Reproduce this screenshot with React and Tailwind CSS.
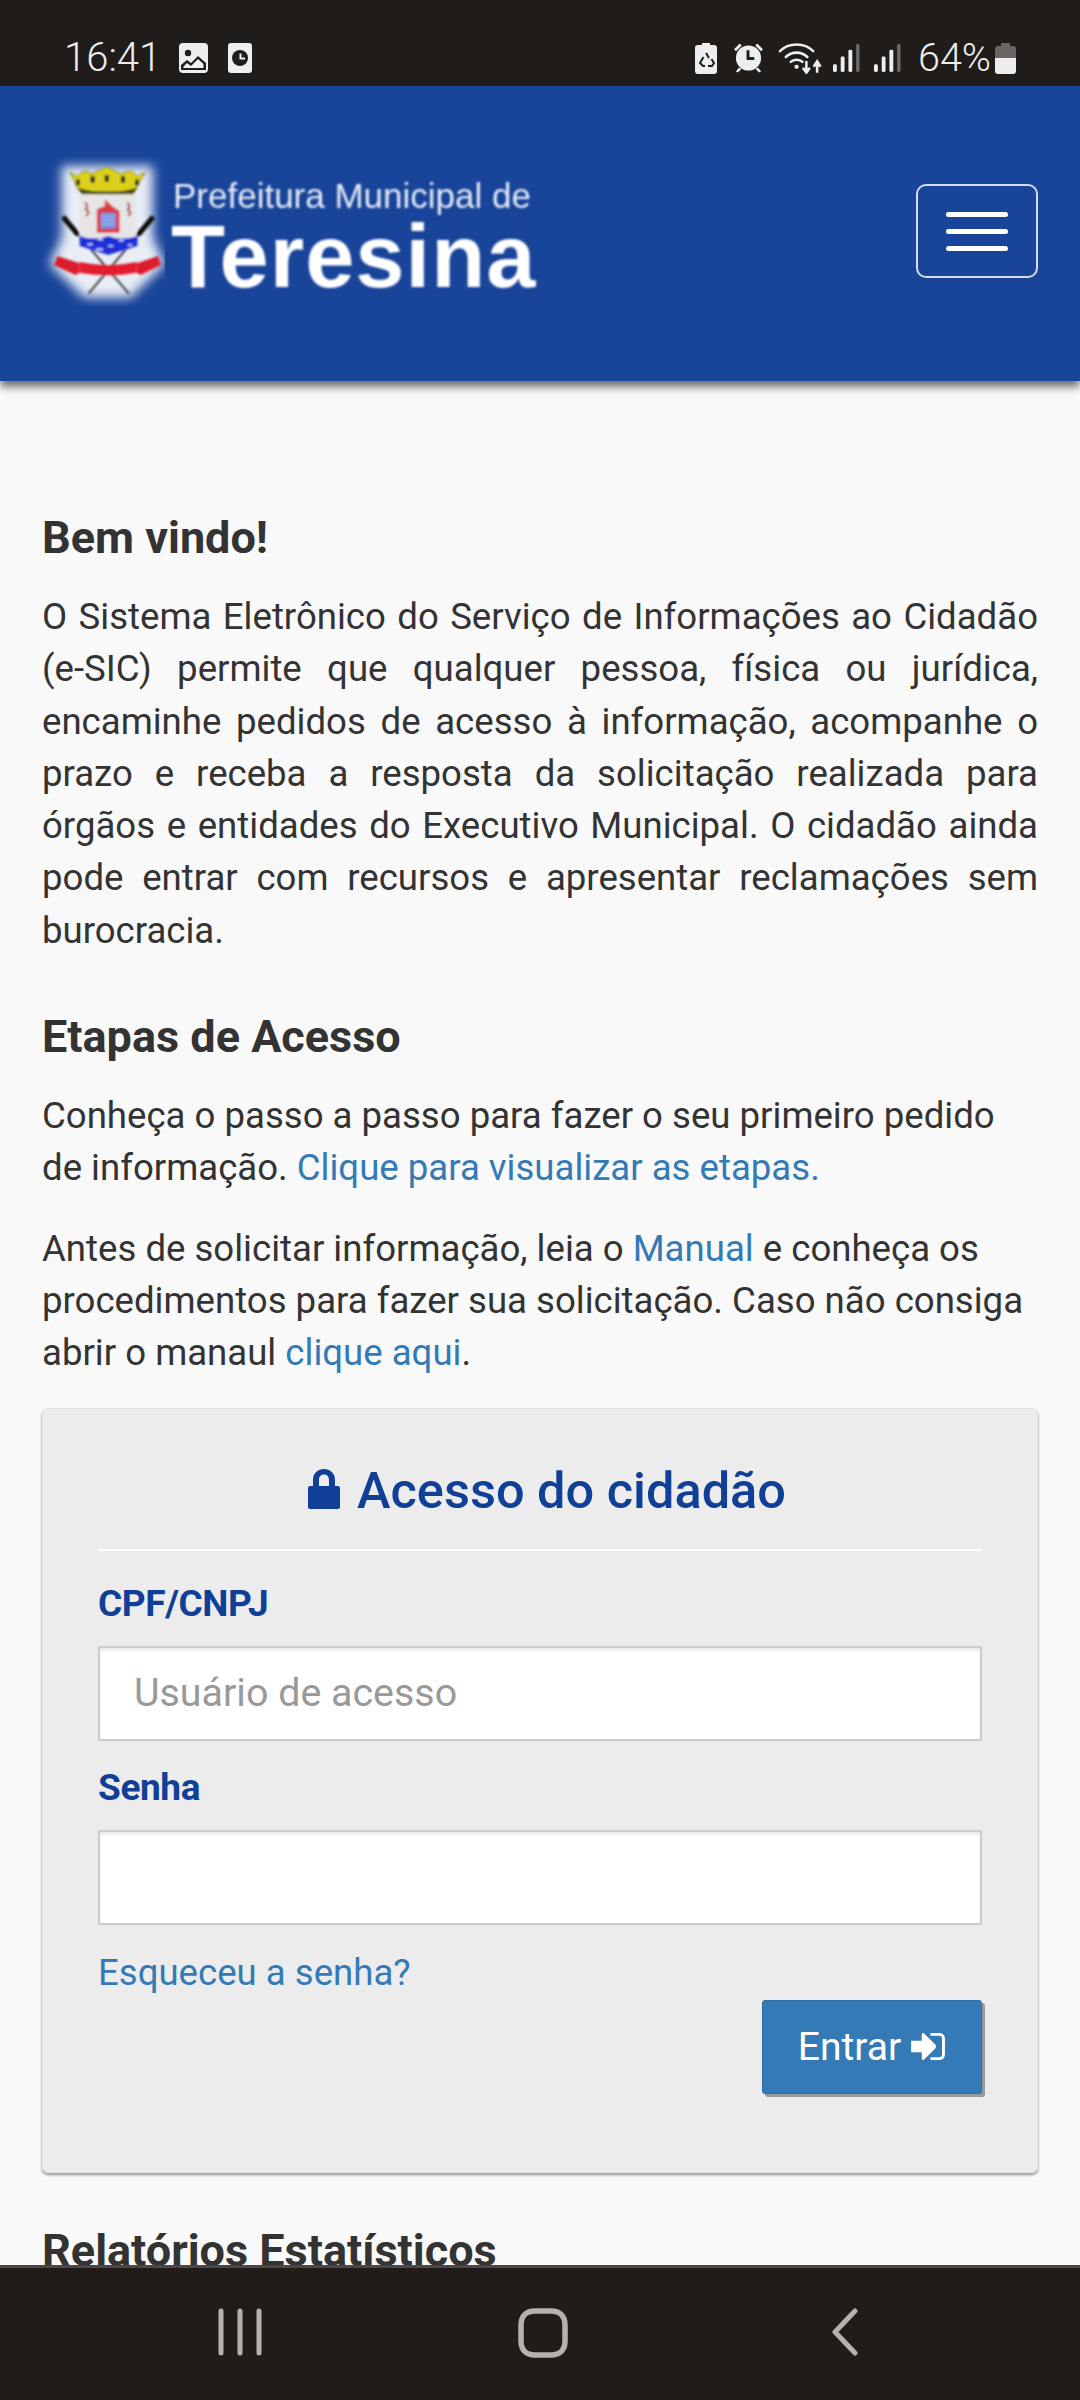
const Crest = () => (
  <svg viewBox="60 75 360 450" preserveAspectRatio="none" className="w-[124px] h-[150px] shrink-0">
    <defs>
      <filter id="glow" x="-30%" y="-30%" width="160%" height="160%"><feGaussianBlur stdDeviation="16" /></filter>
      <filter id="soft" x="-5%" y="-5%" width="110%" height="110%"><feGaussianBlur stdDeviation="2.4" /></filter>
    </defs>
    <path d="M120 105H385V320L420 400L320 500H185L85 400L120 320Z" fill="#e8edf6" filter="url(#glow)" />
    <g filter="url(#soft)">
      <line x1="128" y1="262" x2="315" y2="488" stroke="#444" strokeWidth="6" />
      <line x1="382" y1="262" x2="198" y2="488" stroke="#444" strokeWidth="6" />
      <line x1="128" y1="262" x2="165" y2="308" stroke="#111" strokeWidth="15" strokeLinecap="round" />
      <line x1="382" y1="262" x2="345" y2="308" stroke="#111" strokeWidth="15" strokeLinecap="round" />
      <path d="M172 185H335V320L340 345L255 372L172 345Z" fill="#e6e6e6" />
      <path d="M145 125L165 135L185 120L210 128L250 108L290 128L320 120L340 135L362 125L338 170L325 182H180L165 170Z" fill="#dbd11e" stroke="#55500c" strokeWidth="2" />
      <path d="M165 170Q250 195 340 170L328 190H178Z" fill="#4d4a0c" />
      <rect x="163" y="145" width="10" height="18" fill="#222" /><rect x="204" y="135" width="12" height="20" fill="#222" /><rect x="245" y="132" width="12" height="20" fill="#222" /><rect x="292" y="135" width="12" height="20" fill="#222" /><rect x="333" y="145" width="10" height="18" fill="#222" />
      <path d="M222 235L245 225L245 205L270 228L288 240V305H222Z" fill="#e03a44" />
      <rect x="233" y="245" width="44" height="48" fill="#6f8fe0" />
      <path d="M235 256H275M235 268H275M235 280H275" stroke="#c4d0f2" strokeWidth="3" />
      <path d="M187 215Q200 225 190 235Q205 245 190 255M310 215Q322 225 312 235Q326 245 312 255" fill="none" stroke="#a8463c" strokeWidth="6" />
      <path d="M172 315Q215 330 255 315Q295 330 340 315V345L255 372L172 345Z" fill="#1d2fd8" />
      <path d="M195 340H210M225 325H240M255 345H270M285 328H300M312 342H325M220 355H240" stroke="#dce4ff" strokeWidth="5" />
      <path d="M108 375L172 397V425L160 432L98 402Z" fill="#dc1c2c" />
      <path d="M400 375L338 397V425L350 432L408 402Z" fill="#dc1c2c" />
      <path d="M172 393Q255 412 338 393V425Q255 440 172 425Z" fill="#e31d2e" />
    </g>
  </svg>
);

const Lock = () => (
  <svg viewBox="0 0 32 40" className="w-[32px] h-[40px] mr-[17px] mt-[-4px] shrink-0" fill="#0f3f96">
    <path fillRule="evenodd" d="M5 17V11C5 4 10 0 16 0S27 4 27 11V17H30C31 17 32 18 32 19V38C32 39 31 40 30 40H2C1 40 0 39 0 38V19C0 18 1 17 2 17ZM11 17H21V11C21 7.5 19 5.500 16 5.500S11 7.500 11 11Z" />
  </svg>
);

const LogIn = () => (
  <svg viewBox="0 0 36 30" className="w-[35px] h-[29px] ml-[10px] shrink-0" fill="#fff">
    <path d="M0 9H11V2.500C11 1 12.500 .5 13.500 1.500L25 13C26 14 26 16 25 17L13.500 28.500C12.500 29.500 11 29 11 27.500V21H0Z" />
    <path d="M20 1H29C33 1 35 3.500 35 7V23C35 26.500 33 29 29 29H20V26H29C31 26 32 25 32 23V7C32 5 31 4 29 4H20Z" />
  </svg>
);

const Signal = () => (
  <svg viewBox="0 0 28 30" className="w-[27px] h-[29px]" fill="#eee">
    <rect x="0" y="21" width="4" height="8" rx="1.500" />
    <rect x="8" y="13" width="4" height="16" rx="1.500" />
    <rect x="16" y="6" width="4" height="23" rx="1.500" />
    <rect x="24" y="0" width="3.500" height="29" rx="1.500" fill="#6e6a68" />
  </svg>
);

const StatusBar = () => (
  <div className="h-[86px] bg-[#201c1a] text-[#eeeeee] shrink-0 flex items-start justify-between pt-[42px] pl-[64px] pr-[64px] font-['Roboto',sans-serif]">
    <div className="flex items-center h-[32px]">
      <span className="text-[40px] leading-[32px] font-light w-[93px] whitespace-nowrap">16:41</span>
      <svg viewBox="0 0 29 30" className="w-[29px] h-[30px] ml-[22px]">
        <rect width="29" height="30" rx="4" fill="#eee" />
        <circle cx="9" cy="10" r="3.200" fill="#201c1a" />
        <path d="M2 27V22L8 17L12 20L19 13L27 20V27Z" fill="#201c1a" />
        <path d="M4.500 25V23.500L8 20L12 23L19 16L24.500 21V25Z" fill="#eee" />
      </svg>
      <svg viewBox="0 0 24 30" className="w-[24px] h-[30px] ml-[20px]">
        <rect width="24" height="30" rx="3" fill="#eee" />
        <circle cx="12" cy="15" r="8" fill="#201c1a" />
        <path d="M11.500 10.500H13.500V14.500H17V16.500H11.500Z" fill="#eee" />
      </svg>
    </div>
    <div className="flex items-center h-[32px]">
      <svg viewBox="0 0 22 31" className="w-[22px] h-[31px]">
        <path d="M7 0H15V2H19C21 2 22 3 22 5V28C22 30 21 31 19 31H3C1 31 0 30 0 28V5C0 3 1 2 3 2H7Z" fill="#eee" />
        <path d="M11 10L14 15M8.500 14L5 20L8 23H10M13 23H17L19 20L16.500 16" fill="none" stroke="#201c1a" strokeWidth="2" />
      </svg>
      <svg viewBox="0 0 30 30" className="w-[29px] h-[30px] ml-[17px]">
        <path d="M0 6L6 0L8 2L2 8ZM30 6L24 0L22 2L28 8ZM5 25L2 29L4 30L8 26ZM25 25L28 29L26 30L22 26Z" fill="#eee" />
        <circle cx="15" cy="15" r="13" fill="#eee" />
        <path d="M13 7H16V14H21V17H13Z" fill="#201c1a" />
      </svg>
      <svg viewBox="0 0 46 32" className="w-[45px] h-[32px] ml-[15px]">
        <path d="M2 9C11 0 27 0 36 9M8 15C14 9 24 9 30 15M13 20C16 17 22 17 25 20" fill="none" stroke="#eee" strokeWidth="2.600" strokeLinecap="round" />
        <circle cx="19" cy="25" r="2.200" fill="#eee" />
        <path d="M29 19V30M25.500 26L29 31L32.500 26M40 31V21M36.500 25L40 19.500L43.500 25" fill="none" stroke="#eee" strokeWidth="2.600" />
      </svg>
      <div className="ml-[10px] flex gap-[14px]">
        <Signal />
        <Signal />
      </div>
      <span className="text-[39.500px] leading-[32px] ml-[17px] font-light w-[72px] whitespace-nowrap">64%</span>
      <svg viewBox="0 0 21 31" className="w-[21px] h-[31px] ml-[5px]">
        <path d="M6 0H15V3H18C20 3 21 4 21 6V15H0V6C0 4 1 3 3 3H6Z" fill="#6a6563" />
        <path d="M0 15H21V28C21 30 20 31 18 31H3C1 31 0 30 0 28Z" fill="#eee" />
      </svg>
    </div>
  </div>
);

const Header = () => (
  <header className="relative z-10 h-[295px] bg-[#18449a] shrink-0 shadow-[0_6px_8px_rgba(0,0,0,0.55)] flex items-center justify-between pl-[41px] pr-[42px] pb-[5px]">
    <div className="flex items-center">
      <Crest />
      <div className="ml-[6px] mt-[16px] flex flex-col font-['Liberation_Sans',sans-serif] text-white blur-[0.8px]">
        <span className="pl-[2px] text-[35px] leading-[36px] opacity-90 whitespace-nowrap">Prefeitura Municipal de</span>
        <span className="text-[88.500px] leading-[86px] font-bold tracking-[1px] whitespace-nowrap">Teresina</span>
      </div>
    </div>
    <button className="w-[122px] h-[94px] border-2 border-[#d6dced] rounded-[10px] flex flex-col items-center justify-center gap-[12px]">
      <span className="block w-[62px] h-[5px] rounded-full bg-white"></span>
      <span className="block w-[62px] h-[5px] rounded-full bg-white"></span>
      <span className="block w-[62px] h-[5px] rounded-full bg-white"></span>
    </button>
  </header>
);

const A = ({ children }) => <a className="text-[#337ab7]">{children}</a>;

const Field = ({ label, placeholder }) => (
  <div>
    <div className="text-[#0f3f96] font-bold text-[37px] leading-[50px] tracking-[-0.4px]">{label}</div>
    <div className="mt-[17px] h-[95px] bg-white border-2 border-[#cccccc] shadow-[inset_0_3px_3px_rgba(0,0,0,0.08)] flex items-center pl-[34px] text-[#999999] text-[39.400px]">
      {placeholder}
    </div>
  </div>
);

export default function App() {
  return (
    <div className="w-[1080px] h-[2400px] flex flex-col overflow-hidden bg-[#f9f9f9] font-['Roboto',sans-serif] text-[#333333] text-[36.600px] leading-[52.300px]">
      <StatusBar />
      <Header />
      <main className="flex-1 min-h-0 overflow-hidden px-[42px] pt-[131px]">
        <h2 className="text-[45px] leading-[52px] font-bold text-[#333333]">Bem vindo!</h2>
        <p className="mt-[27px] text-justify">
          O Sistema Eletrônico do Serviço de Informações ao Cidadão (e-SIC) permite que qualquer pessoa, física ou jurídica, encaminhe pedidos de acesso à informação, acompanhe o prazo e receba a resposta da solicitação realizada para órgãos e entidades do Executivo Municipal. O cidadão ainda pode entrar com recursos e apresentar reclamações sem burocracia.
        </p>
        <h2 className="mt-[54px] text-[45px] leading-[52px] font-bold text-[#333333]">Etapas de Acesso</h2>
        <p className="mt-[27px]">
          Conheça o passo a passo para fazer o seu primeiro pedido de informação. <A>Clique para visualizar as etapas.</A>
        </p>
        <p className="mt-[28px]">
          Antes de solicitar informação, leia o <A>Manual</A> e conheça os procedimentos para fazer sua solicitação. Caso não consiga abrir o manaul <A>clique aqui</A>.
        </p>
        <section className="mt-[28px] h-[765px] bg-[#ececec] rounded-[6px] border border-[#e2e2e2] shadow-[0_2px_3px_rgba(0,0,0,0.4)] px-[55px] pt-[52px]">
          <div className="flex items-center justify-center h-[62px] pb-[1px] pl-[14px] text-[#0f3f96] text-[50.500px] leading-[62px]">
            <Lock />
            <span className="font-medium">Acesso do cidadão</span>
          </div>
          <div className="mt-[26px] h-[2px] bg-white"></div>
          <div className="mt-[28px]">
            <Field label="CPF/CNPJ" placeholder="Usuário de acesso" />
          </div>
          <div className="mt-[22px]">
            <Field label="Senha" placeholder="" />
          </div>
          <div className="mt-[22px]"><A>Esqueceu a senha?</A></div>
          <div className="mt-[1px] flex justify-end">
            <button className="w-[220px] h-[94px] bg-[#337ab7] border border-[#2e6da4] rounded-[3px] text-white text-[39px] flex items-center justify-center shadow-[3px_3px_0_#999999]">
              Entrar<LogIn />
            </button>
          </div>
        </section>
        <h2 className="mt-[52px] text-[45px] leading-[52px] font-bold text-[#333333]">Relatórios Estatísticos</h2>
      </main>
      <nav className="h-[135px] shrink-0 bg-[#201c1a] border-t-[3px] border-[#4e4643] flex items-start pl-[217px] pt-[40px]">
        <svg viewBox="0 0 46 48" className="w-[46px] h-[48px]" fill="none" stroke="#b4b1ae" strokeWidth="5" strokeLinecap="round">
          <path d="M4 3V45M23 3V45M42 3V45" />
        </svg>
        <svg viewBox="0 0 50 50" className="w-[50px] h-[50px] ml-[255px]" fill="none" stroke="#b4b1ae" strokeWidth="5.500">
          <path d="M17 3H33C42 3 47 8 47 17V33C47 42 42 47 33 47H17C8 47 3 42 3 33V17C3 8 8 3 17 3Z" />
        </svg>
        <svg viewBox="0 0 26 48" className="w-[26px] h-[48px] ml-[264px]" fill="none" stroke="#b4b1ae" strokeWidth="5" strokeLinecap="round" strokeLinejoin="round">
          <path d="M23 3L3 24L23 45" />
        </svg>
      </nav>
    </div>
  );
}
